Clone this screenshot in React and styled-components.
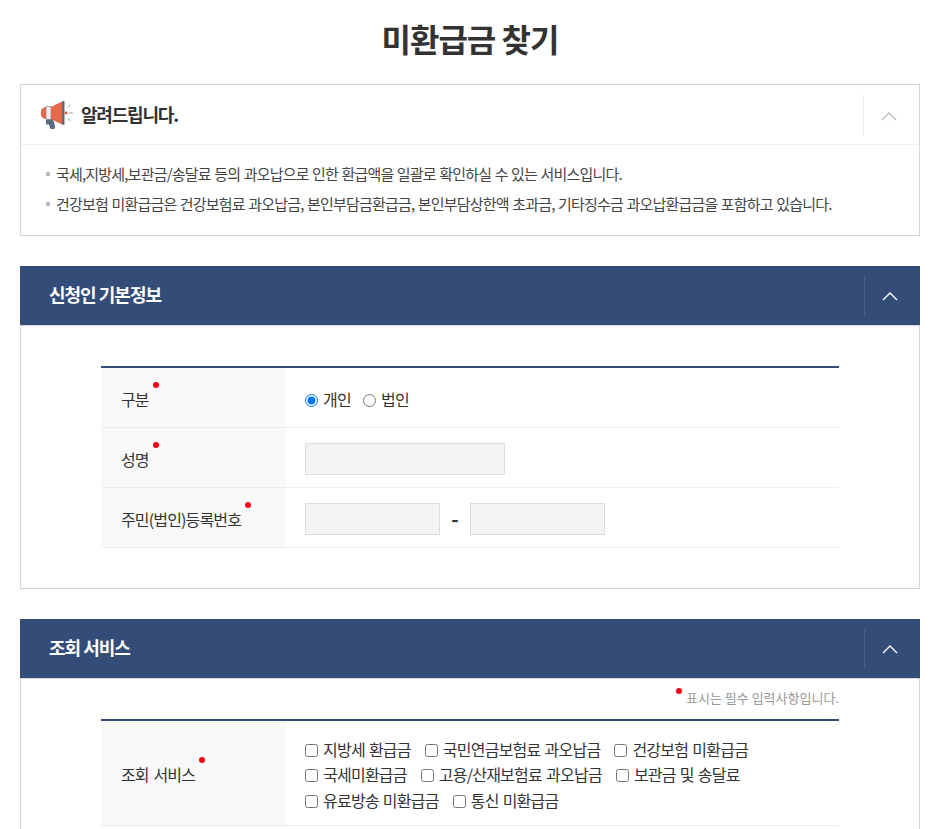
import styled, { createGlobalStyle } from "styled-components";

const GlobalStyle = createGlobalStyle`
  html, body {
    margin: 0;
    height: 829px;
    overflow: hidden;
    background: #fff;
  }
  body {
    font-family: "Noto Sans CJK KR", "Noto Sans", sans-serif;
    color: #333;
  }
  * {
    box-sizing: border-box;
  }
`;

const Page = styled.div`
  width: 900px;
  margin-left: 20px;
`;
const Title = styled.h1`
  margin: 0;
  height: 84px;
  padding-top: 15px;
  text-align: center;
  font-size: 32px;
  line-height: 47px;
  font-weight: 700;
  letter-spacing: -1px;
  color: #333;
`;
const NoticeBox = styled.section`
  border: 1px solid #d5d5d5;
  margin-bottom: 30px;
`;
const NoticeHead = styled.div`
  height: 60px;
  display: flex;
  align-items: center;
  padding-left: 20px;
  border-bottom: 1px solid #eee;
`;
const NoticeTitle = styled.h2`
  flex: 1;
  margin: -2px 0 0 8px;
  font-size: 18px;
  font-weight: 700;
  letter-spacing: -1.2px;
  color: #333;
`;
const Toggle = styled.div`
  width: 56px;
  height: 40px;
  display: flex;
  align-items: center;
  justify-content: center;
  padding: ${(p) => (p.$dark ? "0" : "3px")} 5px 0 0;
  border-left: 1px solid ${(p) => (p.$dark ? "#4a6087" : "#eee")};
`;
const NoticeList = styled.ul`
  list-style: none;
  margin: 0;
  padding: 14px 25px 16px;
`;
const NoticeItem = styled.li`
  position: relative;
  padding-left: 10px;
  font-size: 15px;
  line-height: 30px;
  letter-spacing: -0.8px;
  word-spacing: 0.85px;
  color: #444;
  &::before {
    content: "";
    position: absolute;
    left: 0;
    top: 13px;
    width: 4px;
    height: 4px;
    background: #bbb;
  }
`;
const Section = styled.section`
  margin-bottom: 30px;
`;
const SectionHead = styled.div`
  height: 60px;
  background: #344d78;
  border-bottom: 1px solid #d5d5d5;
  display: flex;
  align-items: center;
  padding-left: 29px;
`;
const SectionTitle = styled.h2`
  flex: 1;
  margin: -3px 0 0;
  font-size: 18px;
  font-weight: 700;
  letter-spacing: -1px;
  color: #fff;
`;
const SectionBody = styled.div`
  border: 1px solid #d5d5d5;
  border-top: 0;
  padding: ${(p) => (p.$note ? "0" : "40px")} 80px 40px;
`;
const NoteLine = styled.p`
  margin: 0;
  height: 40px;
  padding-top: 9px;
  text-align: right;
  font-size: 13px;
  line-height: 19px;
  letter-spacing: 0;
  color: #999;
`;
const Required = styled.span`
  position: relative;
  display: inline-block;
  &::after {
    content: "";
    position: absolute;
    right: -10px;
    top: -5px;
    width: 6px;
    height: 6px;
    border-radius: 50%;
    background: #f01;
  }
`;
const NoteDot = styled.i`
  display: inline-block;
  width: 6px;
  height: 6px;
  margin-right: 4px;
  border-radius: 50%;
  background: #f01;
  vertical-align: 9px;
`;
const Table = styled.div`
  border-top: 2px solid #344d78;
`;
const Row = styled.div`
  display: flex;
  min-height: ${(p) => p.$height || 60}px;
  border-bottom: 1px solid #eee;
`;
const Label = styled.div`
  width: 184px;
  flex: none;
  display: flex;
  align-items: center;
  padding: 2px 0 0 20px;
  background: #f9f9f9;
  font-size: 16px;
  letter-spacing: -0.85px;
  word-spacing: 2px;
  color: #333;
`;
const Cell = styled.div`
  flex: 1;
  display: flex;
  align-items: center;
  padding: ${(p) => (p.$lower ? "4px" : "2px")} 0 0 20px;
`;
const Choice = styled.label`
  display: inline-flex;
  align-items: center;
  margin-right: ${(p) => p.$gap || 12}px;
  font-size: 16px;
  line-height: 25.5px;
  letter-spacing: -0.76px;
  word-spacing: 1.2px;
  color: #333;
  input {
    width: 13px;
    height: 13px;
    margin: 1px 5px 0 0;
  }
`;
const TextInput = styled.input`
  width: ${(p) => p.$width}px;
  height: 32px;
  border: 1px solid #ddd;
  background: #f4f4f4;
  padding: 0 10px;
`;
const Dash = styled.span`
  width: 30px;
  text-align: center;
  font-size: 20px;
  font-weight: 700;
  color: #333;
`;
const Checks = styled.div`
  display: flex;
  flex-direction: column;
`;
const CheckRow = styled.div`
  display: flex;
`;

const Chevron = ({ color }) => (
  <svg width="16" height="10" viewBox="0 0 16 10" fill="none">
    <path d="M1 9l7-7 7 7" stroke={color} strokeWidth="1.4" />
  </svg>
);

// 알려드립니다 확성기
const Megaphone = () => (
  <svg width="32" height="28" viewBox="0 0 32 28">
    <path d="M5 18h7l2 7a2.500 2.500 0 0 1-5 1.500l-1-3H5z" fill="#5b6b7d" />
    <path d="M6 6H5a5.500 6 0 0 0 0 12h1z" fill="#e8694a" />
    <rect x="5" y="5.500" width="5" height="13" fill="#eceef1" stroke="#6f7b88" strokeWidth="0.6" />
    <path d="M10 6L21 .5v23l-11-5.500z" fill="#e8694a" />
    <rect x="21" y="0" width="2.500" height="24" rx="1.200" fill="#5b6b7d" />
    <circle cx="25" cy="12" r="1.400" fill="#d9553c" />
    <path d="M26.500 6.500l3-2.500M27.500 12H32M26.500 17.500l3 2.500" stroke="#9aa3ad" strokeWidth="1" />
  </svg>
);

const checkRows = [
  [["지방세 환급금", 14], ["국민연금보험료 과오납금", 14], ["건강보험 미환급금", 0]],
  [["국세미환급금", 14], ["고용/산재보험료 과오납금", 14], ["보관금 및 송달료", 0]],
  [["유료방송 미환급금", 14], ["통신 미환급금", 0]],
];

function App() {
  return (
    <>
      <GlobalStyle />
      <Page>
        <Title>미환급금 찾기</Title>
        <NoticeBox>
          <NoticeHead>
            <Megaphone />
            <NoticeTitle>알려드립니다.</NoticeTitle>
            <Toggle>
              <Chevron color="#bbb" />
            </Toggle>
          </NoticeHead>
          <NoticeList>
            <NoticeItem>국세,지방세,보관금/송달료 등의 과오납으로 인한 환급액을 일괄로 확인하실 수 있는 서비스입니다.</NoticeItem>
            <NoticeItem>건강보험 미환급금은 건강보험료 과오납금, 본인부담금환급금, 본인부담상한액 초과금, 기타징수금 과오납환급금을 포함하고 있습니다.</NoticeItem>
          </NoticeList>
        </NoticeBox>

        <Section>
          <SectionHead>
            <SectionTitle>신청인 기본정보</SectionTitle>
            <Toggle $dark>
              <Chevron color="#fff" />
            </Toggle>
          </SectionHead>
          <SectionBody>
            <Table>
              <Row>
                <Label>
                  <Required>구분</Required>
                </Label>
                <Cell $lower>
                  <Choice>
                    <input type="radio" name="kind" defaultChecked />
                    개인
                  </Choice>
                  <Choice>
                    <input type="radio" name="kind" />
                    법인
                  </Choice>
                </Cell>
              </Row>
              <Row>
                <Label>
                  <Required>성명</Required>
                </Label>
                <Cell>
                  <TextInput $width={200} />
                </Cell>
              </Row>
              <Row>
                <Label>
                  <Required>주민(법인)등록번호</Required>
                </Label>
                <Cell>
                  <TextInput $width={135} />
                  <Dash>-</Dash>
                  <TextInput $width={135} />
                </Cell>
              </Row>
            </Table>
          </SectionBody>
        </Section>

        <Section>
          <SectionHead>
            <SectionTitle>조회 서비스</SectionTitle>
            <Toggle $dark>
              <Chevron color="#fff" />
            </Toggle>
          </SectionHead>
          <SectionBody $note>
            <NoteLine>
              <NoteDot />
              표시는 필수 입력사항입니다.
            </NoteLine>
            <Table>
              <Row $height={105}>
                <Label>
                  <Required>조회 서비스</Required>
                </Label>
                <Cell $lower>
                  <Checks>
                    {checkRows.map((items) => (
                      <CheckRow key={items[0][0]}>
                        {items.map(([text, gap]) => (
                          <Choice key={text} $gap={gap}>
                            <input type="checkbox" />
                            {text}
                          </Choice>
                        ))}
                      </CheckRow>
                    ))}
                  </Checks>
                </Cell>
              </Row>
            </Table>
          </SectionBody>
        </Section>
      </Page>
    </>
  );
}

export default App;
